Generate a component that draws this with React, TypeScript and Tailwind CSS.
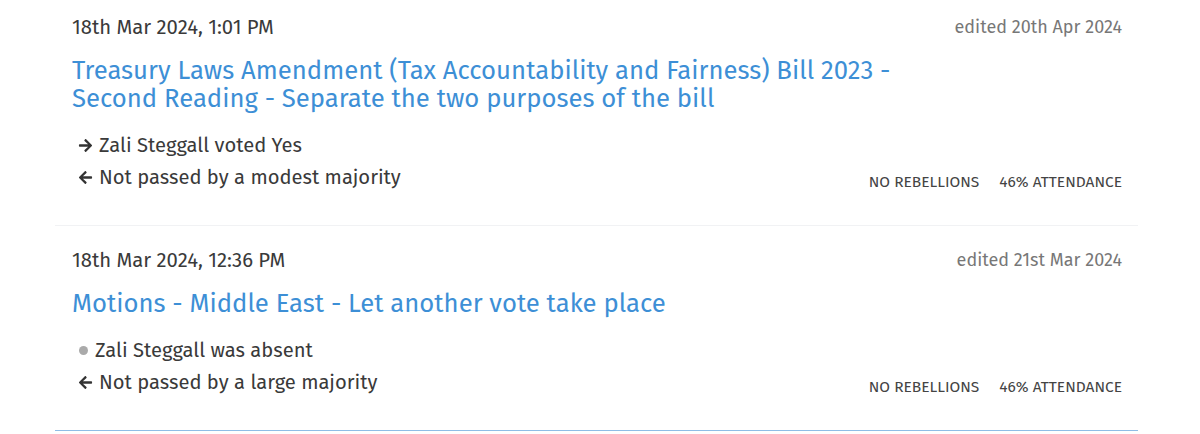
import React from "react";
import { FaArrowRight, FaArrowLeft } from "react-icons/fa";

type Item = {
  date: string;
  edited: string;
  title: string[];
  vote: { kind: "yes" | "absent"; text: string };
  result: string;
};

const items: Item[] = [
  {
    date: "18th Mar 2024, 1:01 PM",
    edited: "edited 20th Apr 2024",
    title: [
      "Treasury Laws Amendment (Tax Accountability and Fairness) Bill 2023 -",
      "Second Reading - Separate the two purposes of the bill",
    ],
    vote: { kind: "yes", text: "Zali Steggall voted Yes" },
    result: "Not passed by a modest majority",
  },
  {
    date: "18th Mar 2024, 12:36 PM",
    edited: "edited 21st Mar 2024",
    title: ["Motions - Middle East - Let another vote take place"],
    vote: { kind: "absent", text: "Zali Steggall was absent" },
    result: "Not passed by a large majority",
  },
];

function Row({ item, first }: { item: Item; first: boolean }) {
  return (
    <div className={`px-[17px] pr-[16px] pb-[32px] ${first ? "pt-[15px] border-b border-[#f1f2f4]" : "pt-[22px] border-b border-[#8fbde6]"}`}>
      <div className="flex justify-between items-center h-[24px]">
        <span className="text-[20.3px] text-[#3a3a3a]">{item.date}</span>
        <span className="text-[18px] text-[#777]">{item.edited}</span>
      </div>
      <div className="mt-[18px] text-[25.7px] leading-[28px] text-[#3d8fd6]">
        {item.title.map((t, i) => (
          <div key={i}>{t}</div>
        ))}
      </div>
      <div className="mt-[16px] flex justify-between items-end">
        <div className="text-[20.2px] leading-[32px] text-[#3a3a3a]">
          <div className="flex items-center">
            {item.vote.kind === "yes" ? (
              <FaArrowRight className="ml-[6px] mr-[6px] w-[15px] h-[15px] text-[#333]" />
            ) : (
              <span className="ml-[7px] mr-[7px] inline-block w-[9px] h-[9px] rounded-full bg-[#aaa]" />
            )}
            <span>{item.vote.text}</span>
          </div>
          <div className="flex items-center">
            <FaArrowLeft className="ml-[6px] mr-[6px] w-[15px] h-[15px] text-[#333]" />
            <span>{item.result}</span>
          </div>
        </div>
        <div className="flex gap-[20px] text-[15.5px] leading-[20px] text-[#444] uppercase mb-[1px]">
          <span>No rebellions</span>
          <span>46% attendance</span>
        </div>
      </div>
    </div>
  );
}

export default function App() {
  return (
    <div
      className="w-[1200px] h-[434px] bg-white overflow-hidden"
      style={{ fontFamily: '"Fira Sans", "Noto Sans", sans-serif' }}
    >
      <div className="mx-[55px] w-[1083px]">
        {items.map((it, i) => (
          <Row key={i} item={it} first={i === 0} />
        ))}
      </div>
    </div>
  );
}
